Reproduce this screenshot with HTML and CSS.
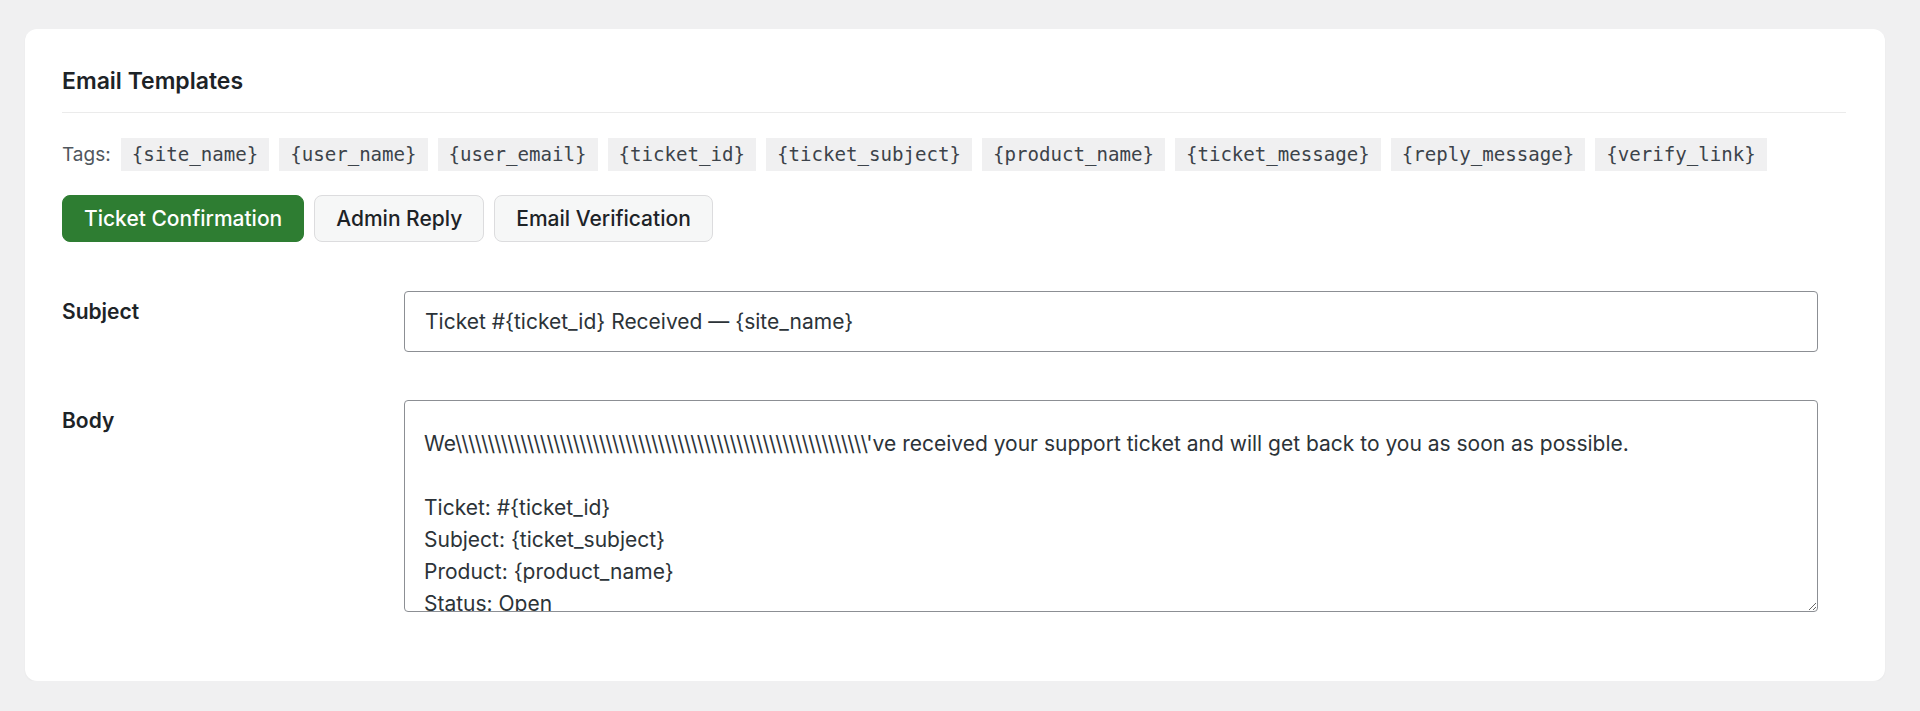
FILE: index.html
```html
<!DOCTYPE html>
<html lang="en">
<head>
    <meta charset="UTF-8">
    <meta name="viewport" content="width=device-width, initial-scale=1.0">
    <title>Email Templates</title>
    <link rel="stylesheet" href="styles.css">
</head>
<body class="settings-page">
    <section class="card">
        <h2 class="card-title">Email Templates</h2>

        <div class="tags">
            <span class="tags-label">Tags:</span>
            <code>{site_name}</code>
            <code>{user_name}</code>
            <code>{user_email}</code>
            <code>{ticket_id}</code>
            <code>{ticket_subject}</code>
            <code>{product_name}</code>
            <code>{ticket_message}</code>
            <code>{reply_message}</code>
            <code>{verify_link}</code>
        </div>

        <div class="tabs">
            <button class="tab active" type="button">Ticket Confirmation</button>
            <button class="tab" type="button">Admin Reply</button>
            <button class="tab" type="button">Email Verification</button>
        </div>

        <div class="form-rows">
            <div class="form-row">
                <label for="tpl-subject">Subject</label>
                <input id="tpl-subject" class="field" type="text" value="Ticket #{ticket_id} Received — {site_name}">
            </div>
            <div class="form-row">
                <label for="tpl-body">Body</label>
                <textarea id="tpl-body" class="field field-body">We\\\\\\\\\\\\\\\\\\\\\\\\\\\\\\\\\\\\\\\\\\\\\\\\\\\\\\\\\\\\\\\'ve received your support ticket and will get back to you as soon as possible.

Ticket: #{ticket_id}
Subject: {ticket_subject}
Product: {product_name}
Status: Open

We'll reply as soon as we can.
{site_name}</textarea>
            </div>
        </div>
    </section>
</body>
</html>
```

FILE: styles.css
```css
body.settings-page {
    margin: 0;
    padding: 29px 35px 0 25px;
    background: #f0f0f1;
    font-family: 'Inter', 'Liberation Sans', sans-serif;
    color: #1d2327;
}

.card {
    background: #fff;
    border-radius: 12px;
    box-shadow: 0 1px 2px rgba(0, 0, 0, 0.04);
    padding: 36px 39px 69px 37px;
}

.card-title {
    margin: 0;
    font-size: 23px;
    line-height: 32px;
    font-weight: 600;
    padding-bottom: 15px;
    border-bottom: 1px solid #ebebeb;
}

/* Tag list */
.tags {
    display: flex;
    align-items: center;
    gap: 10px;
    margin-top: 25px;
}

.tags-label {
    font-size: 19px;
    color: #50575e;
}

.tags code {
    font-family: 'DejaVu Sans Mono', monospace;
    font-size: 19.1px;
    line-height: 33px;
    padding: 0 11px;
    background: #f0f0f1;
    color: #3c434a;
}

/* Template tabs */
.tabs {
    display: flex;
    gap: 10px;
    margin-top: 24px;
}

.tab {
    height: 47px;
    padding: 0 21px;
    font-family: inherit;
    font-size: 21px;
    font-weight: 500;
    color: #1d2327;
    background: #f6f7f7;
    border: 1px solid #dcdcde;
    border-radius: 8px;
    cursor: pointer;
}

.tab.active {
    background: #2e7d32;
    border-color: #2e7d32;
    color: #fff;
}

/* Subject / body fields */
.form-rows {
    display: flex;
    flex-direction: column;
    gap: 48px;
    margin-top: 49px;
}

.form-row {
    display: grid;
    grid-template-columns: 342px 1fr;
    padding-right: 28px;
}

.form-row label {
    font-size: 21px;
    line-height: 30px;
    font-weight: 600;
    padding-top: 6px;
}

.field {
    box-sizing: border-box;
    width: 100%;
    font-family: inherit;
    font-size: 21px;
    color: #2c3338;
    background: #fff;
    border: 1px solid #8c8f94;
    border-radius: 4px;
    margin: 0;
    outline: none;
}

input.field {
    height: 61px;
    padding: 0 20px;
}

.field-body {
    display: block;
    height: 212px;
    padding: 27px 19px 0;
    line-height: 32px;
    overflow: hidden;
    resize: vertical;
}
```
